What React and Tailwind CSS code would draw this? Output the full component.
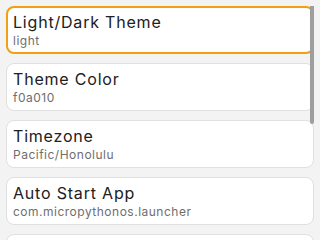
import React from "react";

const items = [
  { title: "Light/Dark Theme", value: "light", focused: true },
  { title: "Theme Color", value: "f0a010" },
  { title: "Timezone", value: "Pacific/Honolulu" },
  { title: "Auto Start App", value: "com.micropythonos.launcher" },
  { title: "", value: "" },
];

export default function App() {
  return (
    <div
      className="relative w-[320px] h-[240px] overflow-hidden bg-[#f3f3f3]"
      style={{ fontFamily: "Inter, 'Open Sans', sans-serif" }}
    >
      <div className="flex flex-col gap-[9px] pt-[6px] px-[6px]">
        {items.map((it, i) => (
          <div
            key={i}
            className={
              it.focused
                ? "h-[48px] shrink-0 rounded-[8px] bg-white border-[2px] border-[#f0a010] px-[5px] pt-[5px]"
                : "h-[48px] shrink-0 rounded-[8px] bg-white border border-[#e0e0e0] px-[6px] pt-[6px]"
            }
          >
            {it.title && (
              <div className="text-[16px] leading-[19px] tracking-[0.8px] text-[#202020] whitespace-nowrap">
                {it.title}
              </div>
            )}
            {it.value && (
              <div className="mt-[1px] text-[12px] leading-[15px] tracking-[0.5px] text-[#6e6e6e] whitespace-nowrap">
                {it.value}
              </div>
            )}
          </div>
        ))}
      </div>
      <div className="absolute left-[310px] top-[6px] w-[4px] h-[118px] rounded-b-[2px] bg-[#9e9e9e]" />
    </div>
  );
}
